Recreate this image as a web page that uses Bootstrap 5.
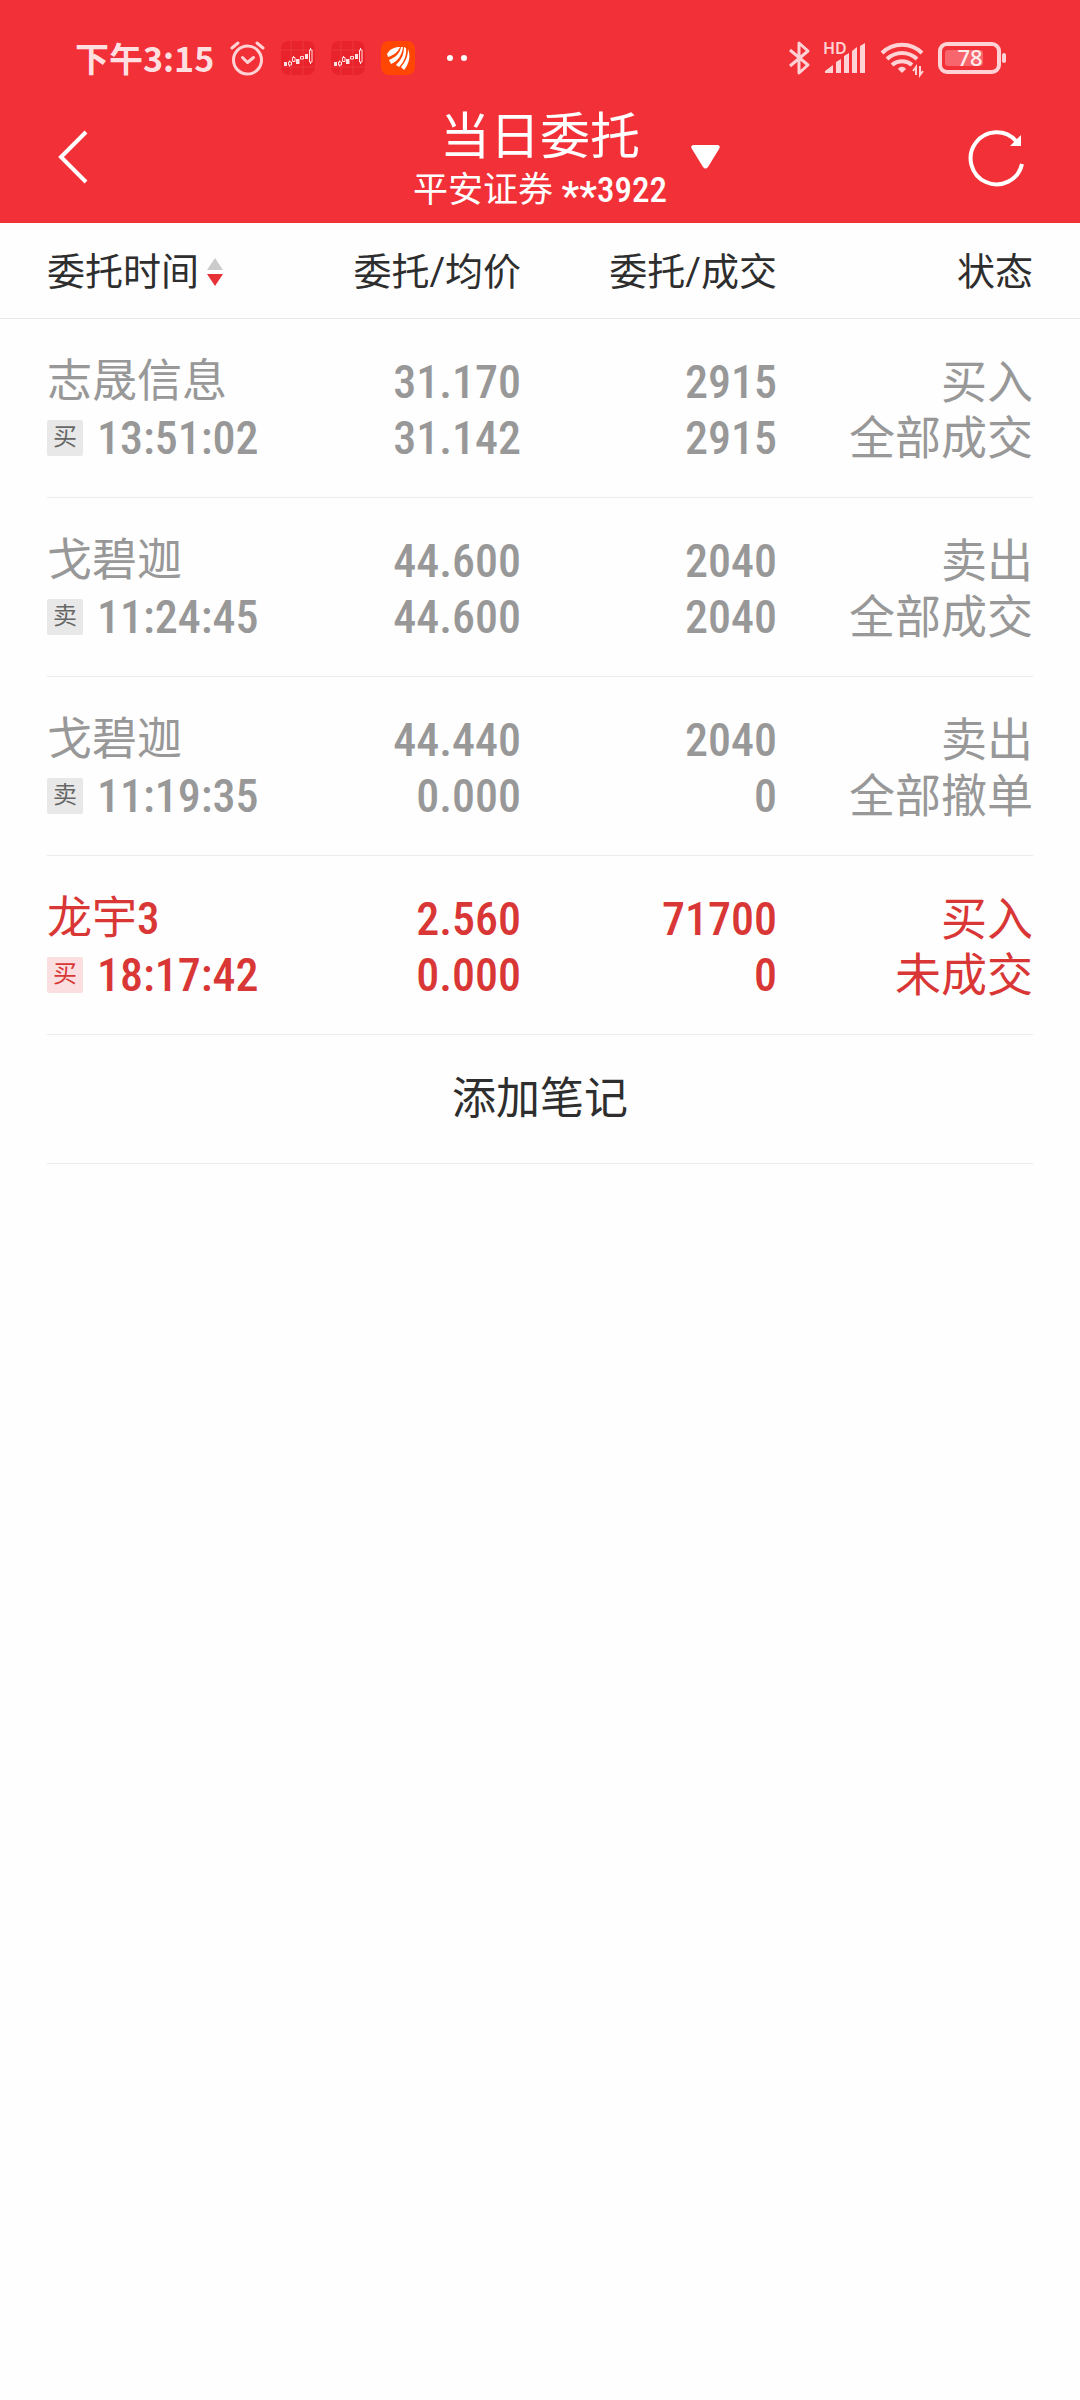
<!DOCTYPE html>
<html lang="zh-CN">
<head>
<meta charset="utf-8">
<meta name="viewport" content="width=device-width, initial-scale=1">
<title>当日委托</title>
<link href="https://cdn.jsdelivr.net/npm/bootstrap@5.3.0/dist/css/bootstrap.min.css" rel="stylesheet">
<style>
  body { font-family: Roboto, "Noto Sans CJK SC", sans-serif; background: #fefefe; color: #2e2e2e; }
  svg { display: block; flex: none; overflow: visible; }
  .app-top { background: #f23037; color: #fff; }

  .status-bar { padding: 33px 73px 21px 75px; height: 104px; color: #ffdfe0; }
  .status-time { font: 700 34px/50px "Noto Sans CJK SC", sans-serif; }
  .status-icons { gap: 16px; }
  .signal-icons { gap: 14px; }

  .title-bar { display: grid; grid-template-columns: 1fr auto 1fr; align-items: center; height: 119px; padding: 0 55px; }
  .title-bar .btn { padding: 0 0 14px; border: 0; color: #fff; line-height: 1; }
  .page-title { font-size: 50px; line-height: 56px; font-weight: 400; }
  .account-name { font-size: 35px; line-height: 52px; }
  .account-no { font-family: "Roboto Condensed", Roboto, sans-serif; font-weight: 500; }
  .account-mask { font-family: Roboto, sans-serif; font-size: 40px; line-height: 1; vertical-align: sub; }
  .title-text { padding-bottom: 2px; }

  .order-table { table-layout: fixed; color: #2e2e2e; }
  .order-table > :not(caption) > * > * { padding: 0; border: 0; background: transparent; color: inherit; }
  .order-table .edge { width: 47px; }
  .order-table .num-col { width: 23.7%; }
  .order-table > thead > tr > th { height: 95px; padding-top: 4px; font-size: 38px; line-height: 1; font-weight: 400; vertical-align: middle; border-bottom: 1px solid #e8e8e8; }
  .order-table > tbody > tr > td { height: 179px; padding-top: 35px; vertical-align: top; font-size: 46px; line-height: 56px; color: #989898; border-bottom: 1px solid #ebebeb; white-space: nowrap; }
  .order-table > tbody > tr > td.edge { border-bottom: 0; }
  .order-table > tbody > tr.active-order > td { color: #d93636; }
  .digits { font-family: "Roboto Condensed", Roboto, "Noto Sans CJK SC", sans-serif; font-weight: 500; }
  .stock-name { font-size: 45px; }
  .side-tag { width: 36px; height: 36px; margin-right: 14px; border-radius: 2px; background: #e8e8e8; color: #666; font-size: 24px; font-weight: 400; line-height: 35px; text-align: center; }
  .active-order .side-tag { background: #fbdfe0; color: #d93636; }

  .note-wrap { margin: 0 47px; border-bottom: 1px solid #ebebeb; }
  .note-wrap .btn { font-size: 44px; line-height: 128px; padding: 0; border: 0; color: #2e2e2e; }
</style>
</head>
<body>
<header class="app-top">
  <div class="status-bar d-flex align-items-center justify-content-between">
    <div class="status-icons d-flex align-items-center">
      <span class="status-time">下午3:15</span>
      <svg width="35" height="36" viewBox="0 0 35 36" fill="none" stroke="#ffd3d5" stroke-width="3" stroke-linecap="round" stroke-linejoin="round"><circle cx="17.500" cy="20" r="14"/><path d="M2 8 8 3M33 8l-6-5M12.500 17.500l5 5 6-5"/></svg>
      <svg width="34" height="34" viewBox="0 0 34 34"><rect width="34" height="34" rx="8" fill="#e9232b"/><path d="M0 9h34M0 26h34M10 0v34M22 0v34" stroke="#ec373e"/><g fill="#ffe1e1"><rect x="3" y="21" width="3" height="4"/><rect x="15" y="18" width="3.500" height="5"/><rect x="24" y="13" width="3" height="5"/></g><g fill="none" stroke="#ffe1e1"><path d="M8.500 19.500v1.500M8.500 24v1.500M7.500 21h3v3h-3zM11.500 16.500h2.500v4h-2.500zM12.500 15v1.500M19.500 15.500h3v2.500h-3zM28.500 9h2.500v12h-2.500zM29.500 7v2M29.500 21v2"/></g></svg>
      <svg width="34" height="34" viewBox="0 0 34 34"><rect width="34" height="34" rx="8" fill="#e9232b"/><path d="M0 9h34M0 26h34M10 0v34M22 0v34" stroke="#ec373e"/><g fill="#ffe1e1"><rect x="3" y="21" width="3" height="4"/><rect x="15" y="18" width="3.500" height="5"/><rect x="24" y="13" width="3" height="5"/></g><g fill="none" stroke="#ffe1e1"><path d="M8.500 19.500v1.500M8.500 24v1.500M7.500 21h3v3h-3zM11.500 16.500h2.500v4h-2.500zM12.500 15v1.500M19.500 15.500h3v2.500h-3zM28.500 9h2.500v12h-2.500zM29.500 7v2M29.500 21v2"/></g></svg>
      <svg width="34" height="34" viewBox="0 0 34 34"><rect width="34" height="34" rx="8" fill="#ff4703"/><g fill="#fff"><path d="M6 13C9 8 13 6 19 6C17 11 13 14 7 16Z"/><path d="M8 19C15 16 19 12 20 6L22 6C21 14 17 20 10 23Z"/><path d="M15 24C20 19 23 14 23 6L25 7C26 14 23 21 18 26Z"/><path d="M20 26C25 20 27 15 27 8C30 15 28 23 23 29Z"/></g></svg>
      <svg class="ms-3" width="22" height="34" viewBox="0 0 22 34" fill="#fff"><circle cx="3" cy="17" r="3"/><circle cx="17" cy="17" r="3"/></svg>
    </div>
    <div class="signal-icons d-flex align-items-center">
      <svg width="22" height="34" viewBox="0 0 22 34" fill="none" stroke="#ffd3d5" stroke-width="3" stroke-linejoin="round"><path d="M1 9 19 24l-9 8V2l9 8L1 25"/></svg>
      <svg width="42" height="34" viewBox="0 0 42 34" fill="#ffd3d5"><text x="-2" y="13" font-family="Noto Sans" font-size="16" font-weight="600">HD</text><path d="M0 32v-2l8-6v8zM11 32V21l5-3v14zM19 32V15l5-3v20zM27 32V10l5-4v26zM35 32V5l5-3v30z"/></svg>
      <svg width="43" height="36" viewBox="0 0 43 36" fill="none" stroke="#ffd3d5" stroke-width="4"><path d="M1 13C12 2 30 2 41 13M6 19c9-8 21-8 30 0M11 25c6-5 14-5 20 0"/><path d="M17 29c2-3 6-3 8 0l-4 4z" fill="#ffd3d5" stroke="none"/><path d="M35 35V27l-3 4M39 26v9l3-4" stroke-width="2"/></svg>
      <svg width="69" height="32" viewBox="0 0 69 32"><rect x="2" y="2" width="59" height="28" rx="7" fill="none" stroke="#ffd3d5" stroke-width="4"/><rect x="7" y="8" width="38" height="16" rx="3" fill="#f6666c"/><rect x="64" y="11" width="4" height="10" rx="2" fill="#ffd3d5"/><text x="32" y="24" text-anchor="middle" fill="#ffeced" font-family="Noto Sans" font-size="22" font-weight="500">78</text></svg>
    </div>
  </div>
  <div class="title-bar">
    <button class="btn text-start" aria-label="返回">
      <svg width="34" height="54" viewBox="0 0 34 54" fill="none" stroke="#fff" stroke-width="4"><path d="M31 2 6 27l25 25"/></svg>
    </button>
    <div class="title-text text-center">
      <h1 class="page-title mb-0">当日委托</h1>
      <div class="account-name">平安证券 <span class="account-no"><span class="account-mask">**</span>3922</span></div>
    </div>
    <div class="d-flex align-items-center justify-content-between ps-4">
      <button class="btn" aria-label="切换账户">
        <svg width="29" height="24" viewBox="0 0 29 24" fill="#fff"><path d="M2 0h25q3 1 1 4L17 22q-2.500 3-5 0L1 4Q-1 1 2 0z"/></svg>
      </button>
      <button class="btn" aria-label="刷新">
        <svg width="57" height="58" viewBox="0 0 57 58"><path d="M54 36A26 26 0 1 1 48 13" fill="none" stroke="#fff" stroke-width="4"/><path d="M53 7v11H42z" fill="#fff"/></svg>
      </button>
    </div>
  </div>
</header>

<main>
  <table class="table order-table mb-0">
    <thead>
      <tr>
        <th class="edge"></th>
        <th scope="col"><div class="d-flex align-items-center">委托时间<svg class="ms-2" width="16" height="28" viewBox="0 0 16 28"><path d="M8 0l8 12H0z" fill="#cbcbcb"/><path d="M0 16h16L8 28z" fill="#e63136"/></svg></div></th>
        <th scope="col" class="num-col text-end">委托/均价</th>
        <th scope="col" class="num-col text-end">委托/成交</th>
        <th scope="col" class="num-col text-end">状态</th>
        <th class="edge"></th>
      </tr>
    </thead>
    <tbody>
      <tr>
        <td class="edge"></td>
        <td><div class="stock-name">志晟信息</div><div class="d-flex align-items-center digits"><span class="side-tag">买</span>13:51:02</div></td>
        <td class="text-end digits">31.170<br>31.142</td>
        <td class="text-end digits">2915<br>2915</td>
        <td class="text-end">买入<br>全部成交</td>
        <td class="edge"></td>
      </tr>
      <tr>
        <td class="edge"></td>
        <td><div class="stock-name">戈碧迦</div><div class="d-flex align-items-center digits"><span class="side-tag">卖</span>11:24:45</div></td>
        <td class="text-end digits">44.600<br>44.600</td>
        <td class="text-end digits">2040<br>2040</td>
        <td class="text-end">卖出<br>全部成交</td>
        <td class="edge"></td>
      </tr>
      <tr>
        <td class="edge"></td>
        <td><div class="stock-name">戈碧迦</div><div class="d-flex align-items-center digits"><span class="side-tag">卖</span>11:19:35</div></td>
        <td class="text-end digits">44.440<br>0.000</td>
        <td class="text-end digits">2040<br>0</td>
        <td class="text-end">卖出<br>全部撤单</td>
        <td class="edge"></td>
      </tr>
      <tr class="active-order">
        <td class="edge"></td>
        <td><div class="stock-name">龙宇<span class="digits">3</span></div><div class="d-flex align-items-center digits"><span class="side-tag">买</span>18:17:42</div></td>
        <td class="text-end digits">2.560<br>0.000</td>
        <td class="text-end digits">71700<br>0</td>
        <td class="text-end">买入<br>未成交</td>
        <td class="edge"></td>
      </tr>
    </tbody>
  </table>
  <div class="note-wrap"><button class="btn w-100">添加笔记</button></div>
</main>
<script src="https://cdn.jsdelivr.net/npm/bootstrap@5.3.0/dist/js/bootstrap.bundle.min.js"></script>
</body>
</html>
